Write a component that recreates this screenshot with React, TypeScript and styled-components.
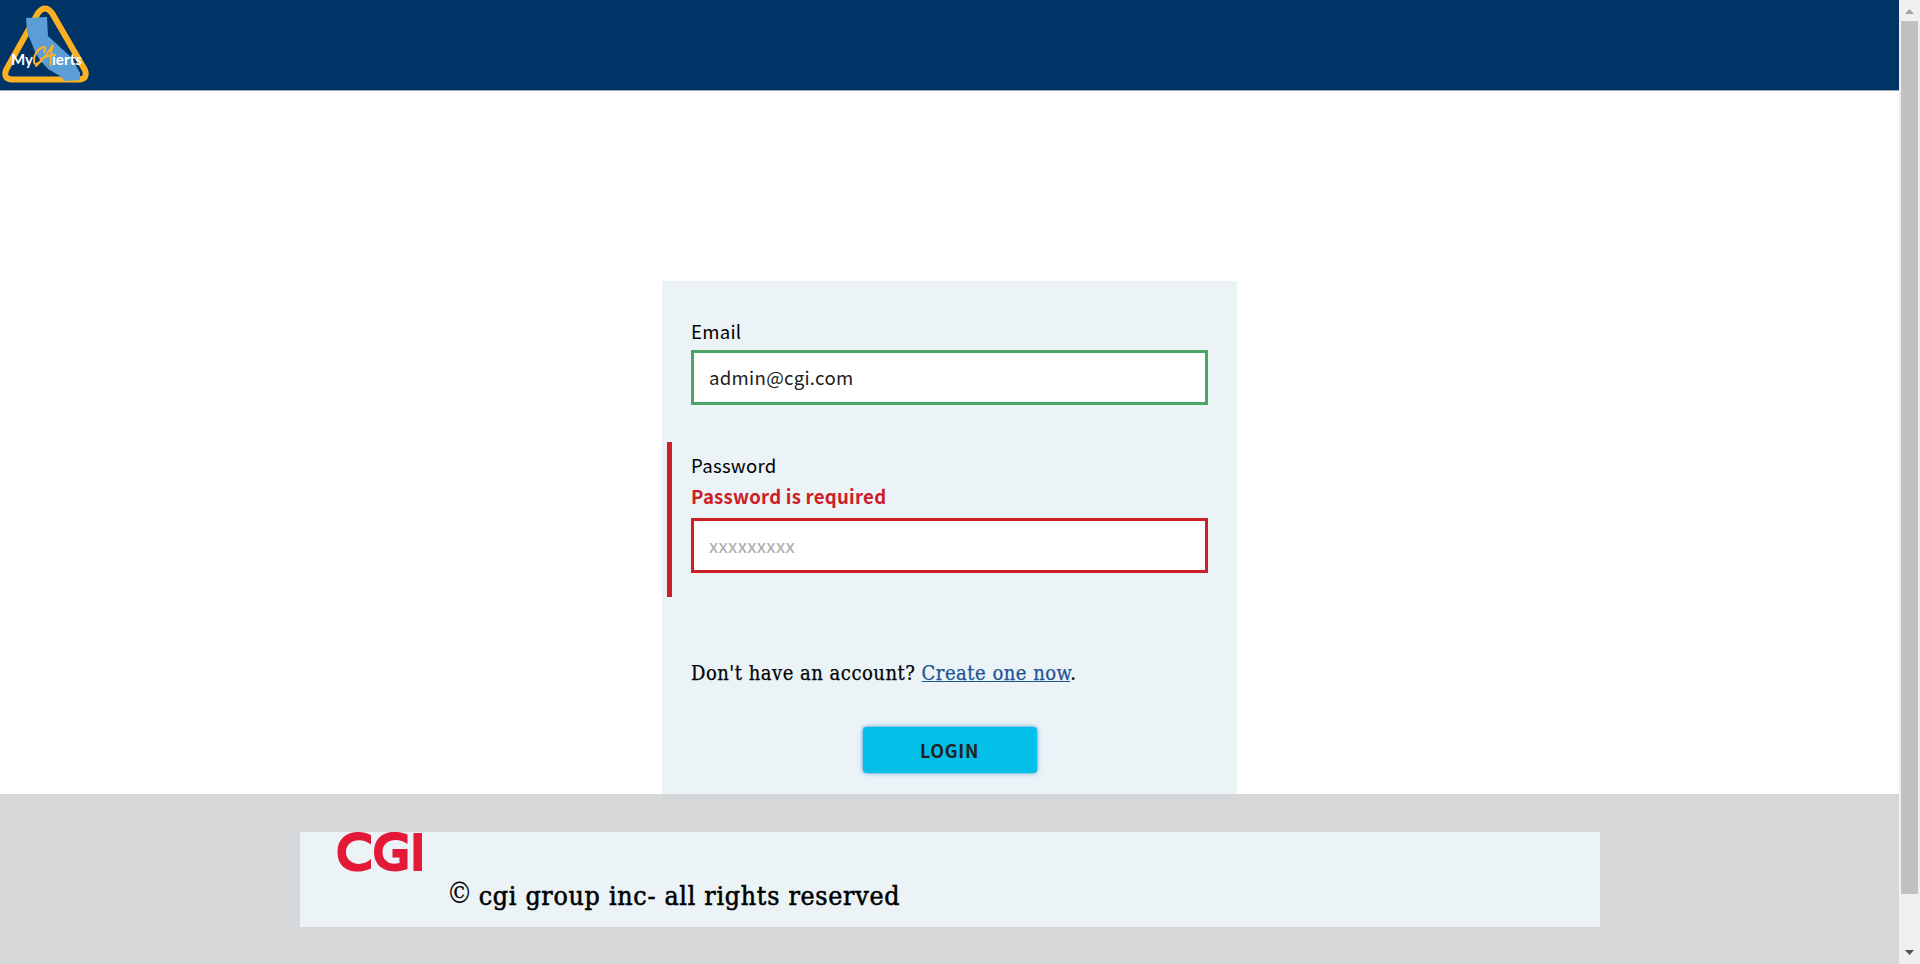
import React from 'react';
import styled, { createGlobalStyle, css } from 'styled-components';

const sans = css`font-family: "Noto Sans CJK SC", "Open Sans", sans-serif;`;
const serif = css`font-family: "DejaVu Serif Condensed", "DejaVu Serif", serif; font-stretch: condensed;`;

const GlobalStyle = createGlobalStyle`
  * { box-sizing: border-box; }
  body { margin: 0; background: #fff; color: #000; overflow: hidden; }
`;
const Screen = styled.div`
  display: grid;
  grid-template-columns: 1fr 21px;
  height: 964px;
`;
const Page = styled.div`
  display: flex;
  flex-direction: column;
  min-width: 0;
`;
const Header = styled.header`
  height: 91px;
  flex: none;
  background: #003366;
  border-bottom: 1px solid #a3a6b3;
`;
const Main = styled.main`
  flex: 1;
  display: flex;
  justify-content: center;
  padding-top: 190px;
`;
const Card = styled.form`
  width: 575px;
  padding-top: 34px;
  background: #ebf3f7;
`;
const Field = styled.div<{ $error?: boolean }>`
  display: flex;
  flex-direction: column;
  margin-left: 5px;
  padding: ${p => (p.$error ? '7px 29px 24px 19px' : '0 29px 0 24px')};
  border-left: ${p => (p.$error ? '5px solid #cd2026' : '0')};
  margin-top: ${p => (p.$error ? '37px' : '0')};
`;
const Label = styled.label<{ $gap: number }>`
  ${sans}
  font-size: 18.6px;
  font-weight: 400;
  letter-spacing: .28px;
  line-height: 32px;
  margin-bottom: ${p => p.$gap}px;
`;
const ErrorText = styled.span`
  ${sans}
  font-size: 18.6px;
  font-weight: 700;
  letter-spacing: .24px;
  line-height: 28px;
  margin-bottom: 8px;
  color: #cd2026;
`;
const Input = styled.input<{ $tone: string }>`
  ${sans}
  height: 55px;
  width: 517px;
  padding: 0 15px 2px;
  border: 3px solid ${p => p.$tone};
  border-radius: 0;
  outline: 0;
  background: #fff;
  color: #212121;
  font-size: 18.6px;
  font-weight: 400;
  letter-spacing: .3px;
  &::placeholder { color: #a9a9a9; opacity: 1; }
`;
const Prompt = styled.p`
  ${serif}
  margin: 61px 0 0 29px;
  font-size: 20px;
  letter-spacing: .5px;
  -webkit-text-stroke: .25px currentColor;
  line-height: 30px;
  white-space: nowrap;
`;
const Link = styled.a`
  color: #205493;
  text-decoration: underline;
  text-decoration-thickness: 1px;
  text-underline-offset: 1px;
`;
const LoginButton = styled.button`
  ${sans}
  display: block;
  width: 174px;
  height: 46px;
  margin: 39px auto 0;
  padding: 0;
  border: 0;
  border-radius: 4px;
  background: #02bfe7;
  box-shadow: 0 0 3px #3e94cf, 0 0 7px #aacdeb;
  color: #212121;
  font-size: 17.9px;
  font-weight: 700;
  letter-spacing: .7px;
`;
const Footer = styled.footer`
  height: 170px;
  flex: none;
  padding-top: 38px;
  background: #d6d7d9;
`;
const FooterPanel = styled.div`
  display: flex;
  width: 1300px;
  height: 95px;
  margin: 0 auto;
  padding-left: 37px;
  background: #ebf3f7;
`;
const Copyright = styled.p`
  ${serif}
  margin: 44px 0 0 24px;
  font-size: 26.5px;
  letter-spacing: .72px;
  -webkit-text-stroke: .55px currentColor;
  line-height: 40px;
  white-space: nowrap;
`;
const Mark = styled.span`
  font-size: 29px;
  letter-spacing: -2.2px;
  line-height: 0;
  vertical-align: 2px;
  -webkit-text-stroke: 0;
`;
const Scrollbar = styled.div`
  display: flex;
  flex-direction: column;
  justify-content: space-between;
  align-items: center;
  background: #f0f0f0;
`;
const Thumb = styled.div`
  width: 17px;
  height: 873px;
  margin-bottom: 49px;
  background: #c1c1c1;
`;
const Arrow = styled.svg`
  display: block;
  width: 21px;
  height: 21px;
  flex: none;
`;
const Logo = styled.svg`display: block;`;

const AlertsLogo = () => (
  <Logo width="92" height="90" viewBox="0 0 92 90">
    <path d="M52 13 L85 70 Q88 79 79 79.5 H12 Q3 79 6 70 L38 13 Q45 4 52 13 Z" fill="none" stroke="#fdb022" strokeWidth="6" strokeLinejoin="round" />
    <path d="M26 18 L47 17 L48 36 L72 58 L80 73 L80 80 L65 81 L60 76 L48 69 L40 60 L36 54 L32 44 L27 32 Z" fill="#5b9ed5" />
    <g fontFamily="Lato, sans-serif" fontSize="16" fontWeight="700" fill="#fff">
      <text x="11" y="65" textLength="22" lengthAdjust="spacingAndGlyphs">My</text>
      <text x="52" y="65" textLength="30" lengthAdjust="spacingAndGlyphs">ierts</text>
    </g>
    <g fill="none" stroke="#fdb022" strokeWidth="2" strokeLinecap="round">
      <path d="M44 52 Q47 46 43 47 Q34 51 34 61 Q34 67 41 61" />
      <path d="M36 66 Q45 58 53 45 Q50 54 51 65 M41 59 Q48 55 55 55" />
    </g>
  </Logo>
);
const CgiLogo = () => (
  <Logo width="86" height="41" viewBox="0 0 86 41">
    <path d="M34 3 V12.5 C24 4.5 9 8 9 20 C9 32 24 36 34 27 V36.5 C20 43 .5 40 .5 20 C.5 1 19 -4 34 3 Z" fill="#e31937" />
    <path d="M70.5 2.5 V12 C60 4.5 45.5 8 45.5 20 C45.5 29 53 33.5 62.5 31 V25.5 H55.5 V17 H70.5 V37 C55 43 37 38 37 20 C37 1 55 -4 70.5 2.5 Z" fill="#e31937" />
    <path d="M76.5 1 H85 V39 H76.5 Z" fill="#e31937" />
  </Logo>
);

export default function App() {
  return (
    <>
      <GlobalStyle />
      <Screen>
        <Page>
          <Header><AlertsLogo /></Header>
          <Main>
            <Card>
              <Field>
                <Label htmlFor="email" $gap={3}>Email</Label>
                <Input id="email" $tone="#4aa564" defaultValue="admin@cgi.com" />
              </Field>
              <Field $error>
                <Label htmlFor="password" $gap={1}>Password</Label>
                <ErrorText>Password is required</ErrorText>
                <Input id="password" type="password" $tone="#cd2026" placeholder="xxxxxxxxx" />
              </Field>
              <Prompt>Don't have an account? <Link href="#">Create one now</Link>.</Prompt>
              <LoginButton type="button">LOGIN</LoginButton>
            </Card>
          </Main>
          <Footer>
            <FooterPanel>
              <CgiLogo />
              <Copyright><Mark>©</Mark> cgi group inc- all rights reserved</Copyright>
            </FooterPanel>
          </Footer>
        </Page>
        <Scrollbar>
          <Arrow viewBox="0 0 21 21"><path d="M6 14 L10.5 9 L15 14 Z" fill="#a3a3a3" /></Arrow>
          <Thumb />
          <Arrow viewBox="0 0 21 21"><path d="M6 7 H15 L10.5 12 Z" fill="#505050" /></Arrow>
        </Scrollbar>
      </Screen>
    </>
  );
}
